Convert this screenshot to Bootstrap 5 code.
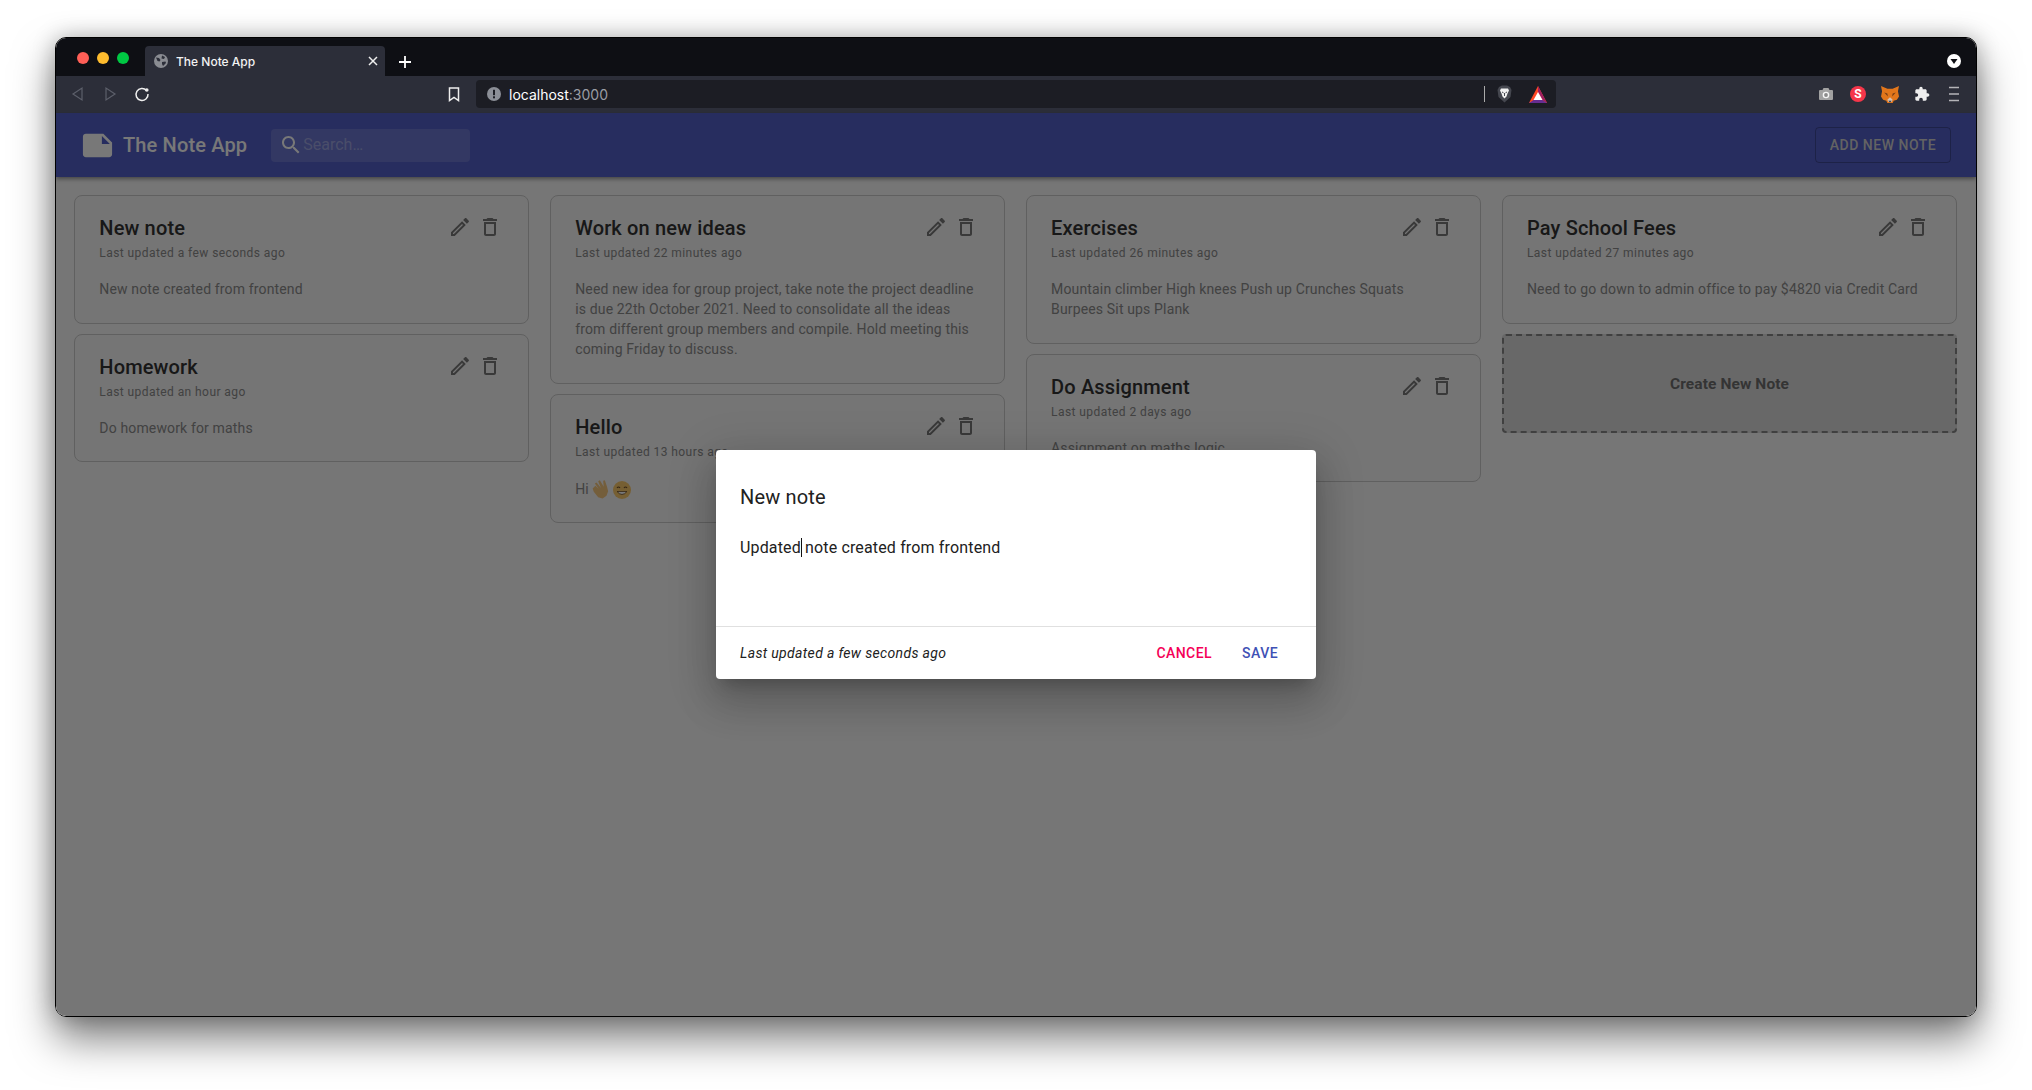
<!DOCTYPE html>
<html lang="en">
<head>
  <meta charset="UTF-8" />
  <title>The Note App</title>
  <link href="https://cdn.jsdelivr.net/npm/bootstrap@5.3.2/dist/css/bootstrap.min.css" rel="stylesheet">
  <style>
    html, body { height: 100%; }
    body { background: #fff; font-family: Roboto, "Liberation Sans", sans-serif; overflow: hidden; padding: 37px 0 0 55px; }

    /* browser window */
    .win { width: 1922px; height: 980px; border: 1px solid #000; border-radius: 11px; overflow: hidden; box-shadow: 0 22px 42px rgba(0,0,0,.5), 0 0 22px rgba(0,0,0,.25); }
    .tabstrip { height: 38px; background: #0e0f14; padding-left: 21px; }
    .light { width: 12px; height: 12px; border-radius: 50%; }
    .tab-item { width: 240px; height: 30px; margin-left: 16px; padding: 0 7px 0 9px; background: #2c2e39; border-radius: 4px 4px 0 0; color: #f2f2f2; font: 500 12px Inter, sans-serif; }
    .toolbar { height: 37px; padding-bottom: 1px; background: #2c2e39; }
    .tb-left { width: 420px; padding: 0 14px; }
    .addr { width: 1080px; height: 28px; background: #1c1d24; border-radius: 4px; padding: 0 9px 0 11px; color: #fff; font: 400 14px Inter, sans-serif; }
    .addr .port { color: #9a9ca3; }
    .addr-sep { width: 1px; height: 16px; background: #aaa; }
    .tb-right { padding-right: 14px; }

    /* app */
    .app-area { height: 904px; }
    .app-bar { height: 64px; padding: 0 25px 0 24px; background: rgb(83,96,202); box-shadow: 0 2px 4px rgba(0,0,0,.4); position: relative; z-index: 1; }
    .brand { color: #fff; font-size: 20px; font-weight: 500; letter-spacing: .15px; margin: 0 24px 0 8px; }
    .search-box { width: 199px; height: 33px; padding-left: 8px; background: rgba(255,255,255,.15); border-radius: 4px; }
    .search-box input { background: none; border: 0; outline: 0; padding: 0; width: 150px; font-size: 16px; color: #fff; }
    .search-box input::placeholder { color: rgba(255,255,255,.35); }
    .add-btn { width: 136px; height: 36px; padding: 0; color: #d2d2d2; font-size: 14px; font-weight: 500; letter-spacing: .5px; border: 1px solid rgba(0,0,0,.25); border-radius: 4px; }

    .note-grid { gap: 20.9px; padding: 18px 18px 0 18.3px; background: #fafafa; height: 840px; }
    .note-col { width: 455px; gap: 10.2px; }
    .note-card { background: #f8f8f8; border: 1px solid #ccc; border-radius: 8px; padding: 16px 24px 23.5px; }
    .note-title { font-size: 20px; font-weight: 500; line-height: 32px; letter-spacing: .15px; color: #333; margin: 0; }
    .note-meta { font-size: 12px; line-height: 20px; letter-spacing: .43px; color: #8c8c8c; margin-bottom: 16px; margin-top: -1px; }
    .note-text { font-size: 14px; line-height: 20px; letter-spacing: .15px; color: #8c8c8c; margin: 0; }
    .note-actions { margin-top: 3px; margin-right: 2px; gap: 6px; }
    .note-actions svg { fill: #7a7a7a; display: block; }
    .emo { vertical-align: -5px; }
    .create-card { height: 99px; padding-top: 2px; background: #dedede; border: 2px dashed #888; border-radius: 4px; color: #707070; font-size: 15.5px; font-weight: 700; letter-spacing: .1px; }

    /* dialog */
    .dim { position: absolute; inset: 0; background: rgba(0,0,0,.53); z-index: 2; }
    .note-modal { position: absolute; top: 337px; left: 660px; width: 600px; height: 229px; z-index: 3; border: 0; border-radius: 4px; background: #fff; box-shadow: 0 11px 15px -7px rgba(0,0,0,.2), 0 24px 38px 3px rgba(0,0,0,.14), 0 9px 46px 8px rgba(0,0,0,.12); }
    .dlg-title { font-size: 20px; font-weight: 400; line-height: 32px; letter-spacing: .15px; color: #212121; padding: 31px 24px 0; margin: 0; }
    .dlg-text { font-size: 16px; line-height: 24px; letter-spacing: .15px; color: #212121; padding: 23px 24px 0; height: 113px; }
    .caret-bar { display: inline-block; width: 1px; height: 19px; background: #111; vertical-align: -4px; margin-right: -1px; }
    .dlg-foot { height: 53px; border-top: 1px solid #e0e0e0; padding: 0 30px 0 24px; }
    .dlg-foot em { font-size: 14px; letter-spacing: .34px; color: #212121; }
    .dlg-btn { padding: 6px 8px; font-size: 14px; font-weight: 500; letter-spacing: .45px; border: 0; line-height: 20px; }
    .dlg-btn.cancel { color: #f50057; }
    .dlg-btn.save { color: #3f51b5; margin-left: 14px; }
  </style>
</head>
<body>

<svg width="0" height="0" class="position-absolute">
  <symbol id="ic-edit" viewBox="0 0 24 24"><path d="M14.06 9.02l.92.92L5.92 19H5v-.92l9.06-9.06M17.66 3c-.25 0-.51.1-.7.29l-1.83 1.83 3.75 3.75 1.83-1.83c.39-.39.39-1.02 0-1.41l-2.34-2.34c-.2-.2-.45-.29-.71-.29zm-3.6 3.19L3 17.25V21h3.75L17.81 9.94l-3.75-3.75z"/></symbol>
  <symbol id="ic-trash" viewBox="0 0 24 24"><path d="M16 9v10H8V9h8m-1.5-6h-5l-1 1H5v2h14V4h-3.5l-1-1zM18 7H6v12c0 1.1.9 2 2 2h8c1.1 0 2-.9 2-2V7z"/></symbol>
</svg>

<div class="win d-flex flex-column">

  <!-- tabs -->
  <div class="tabstrip d-flex align-items-end flex-shrink-0">
    <div class="d-flex gap-2 align-self-center" style="margin-top:1px">
      <span class="light" style="background:#ff5f57"></span>
      <span class="light" style="background:#febc2e"></span>
      <span class="light" style="background:#00c843"></span>
    </div>
    <div class="tab-item d-flex align-items-center">
      <svg width="14" height="14" viewBox="0 0 14 14" class="me-2 flex-shrink-0"><circle cx="7" cy="7" r="7" fill="#8a8c92"/><path d="M2 3.5l3 .5 1.5 2-1 1.5-2-.5zM8 1.5l3 1.5-1 2-2.5-.5zM8 8l3.5-.5.5 1.5-3 3-1-2z" fill="#2c2e39"/></svg>
      <span class="flex-grow-1">The Note App</span>
      <svg width="10" height="10" viewBox="0 0 10 10"><path d="M1 1l8 8M9 1l-8 8" stroke="#eee" stroke-width="1.5"/></svg>
    </div>
    <svg width="14" height="14" viewBox="0 0 14 14" class="align-self-end" style="margin:0 0 7px 13px"><path d="M7 1v12M1 7h12" stroke="#fff" stroke-width="1.8"/></svg>
    <svg width="14" height="14" viewBox="0 0 14 14" class="ms-auto align-self-end" style="margin:0 15px 8px 0"><circle cx="7" cy="7" r="7" fill="#fff"/><path d="M3.5 5h7L7 10z" fill="#0e0f14"/></svg>
  </div>

  <!-- address bar -->
  <div class="toolbar d-flex align-items-center flex-shrink-0">
    <div class="tb-left d-flex align-items-center gap-3">
      <svg width="16" height="16" viewBox="0 0 16 16"><path d="M12 2v12L3 8z" fill="none" stroke="#5d606b" stroke-width="1.2"/></svg>
      <svg width="16" height="16" viewBox="0 0 16 16"><path d="M4 2v12l9-6z" fill="none" stroke="#5d606b" stroke-width="1.2"/></svg>
      <svg width="16" height="16" viewBox="0 0 16 16"><path d="M12.5 4.5A6 6 0 1 0 14 8" fill="none" stroke="#eee" stroke-width="1.5"/><circle cx="12.8" cy="4" r="1.8" fill="#eee"/></svg>
      <svg width="12" height="15" viewBox="0 0 12 15" class="ms-auto" style="margin-right:2px"><path d="M1.5 1h9v12.5L6 10.5l-4.500 3z" fill="none" stroke="#eee" stroke-width="1.5"/></svg>
    </div>
    <div class="addr d-flex align-items-center">
      <svg width="14" height="14" viewBox="0 0 14 14" class="me-2 flex-shrink-0"><circle cx="7" cy="7" r="7" fill="#8c8f97"/><rect x="6" y="2.8" width="2" height="5.4" fill="#1c1d24"/><rect x="6" y="9.3" width="2" height="2" fill="#1c1d24"/></svg>
      <span>localhost<span class="port">:3000</span></span>
      <span class="addr-sep ms-auto"></span>
      <svg width="15" height="18" viewBox="0 0 15 18" style="margin-left:12px"><path d="M2 2l3-1.5h5L13 2l1.500 3-1 7-6 5.500-6-5.500-1-7z" fill="#45474f"/><path d="M4 3.5h7l1 2-1.500 3-1 3-2 2-2-2-1-3L3 5.500z" fill="#f1f1f1"/><path d="M5 7l1.500.8M10 7l-1.500.8M7.500 8v3" stroke="#45474f" stroke-width="1"/></svg>
      <svg width="18" height="17" viewBox="0 0 18 17" style="margin-left:17px"><path d="M9 0l9 17H0z" fill="#ff4724"/><path d="M9 0l9 17-4.500-3L9 6z" fill="#9e1f63"/><path d="M0 17l4.500-3h9l4.500 3z" fill="#662d91"/><path d="M9 6l4.500 8h-9z" fill="#fff"/></svg>
    </div>
    <div class="tb-right d-flex align-items-center gap-3 ms-auto">
      <svg width="16" height="16" viewBox="0 0 16 16"><path d="M5.5 2h5l1 2H14a1 1 0 0 1 1 1v8a1 1 0 0 1-1 1H2a1 1 0 0 1-1-1V5a1 1 0 0 1 1-1h2.500z" fill="#a2a2a2"/><circle cx="8" cy="9" r="3.3" fill="#f4f4f4"/><circle cx="8" cy="9" r="1.9" fill="#8a8a8a"/></svg>
      <span class="d-flex align-items-center justify-content-center rounded-circle" style="width:16px;height:16px;background:#f5364a;color:#fff;font:700 12px Roboto,sans-serif">S</span>
      <svg width="18" height="17" viewBox="0 0 17 16" style="margin:0 -1px"><path d="M0 0l6 2.500h5L17 0l-1 5 1 5-2 3-3 1-1 2H6l-1-2-3-1-2-3 1-5z" fill="#e2761b"/><path d="M3 6l3 1 .5 3zM14 6l-3 1-.5 3z" fill="#763d16"/><path d="M6 13l2.500-2.500L11 13l-1 2H7z" fill="#d7c1b3"/><path d="M7 14h3l-1.500 1.500z" fill="#233447"/></svg>
      <svg width="16" height="16" viewBox="0 0 24 24"><path fill="#eee" d="M20.5 11H19V7c0-1.1-.9-2-2-2h-4V3.5C13 2.12 11.88 1 10.5 1S8 2.12 8 3.5V5H4c-1.1 0-1.99.9-1.99 2v3.8H3.5c1.49 0 2.7 1.21 2.7 2.7s-1.21 2.7-2.7 2.7H2V20c0 1.1.9 2 2 2h3.8v-1.500c0-1.49 1.21-2.7 2.7-2.7 1.49 0 2.7 1.21 2.7 2.7V22H17c1.1 0 2-.9 2-2v-4h1.500c1.38 0 2.5-1.12 2.5-2.5S21.88 11 20.5 11z"/></svg>
      <svg width="16" height="16" viewBox="0 0 16 16"><path d="M3 1.5h10M3 8h10M3 14.5h10" stroke="#b4b4b8" stroke-width="1.5"/></svg>
    </div>
  </div>

  <!-- the note app -->
  <div class="app-area position-relative">
    <nav class="app-bar d-flex align-items-center">
      <svg width="35" height="35" viewBox="0 0 24 24" class="flex-shrink-0"><path fill="#fff" d="M22 10l-6-6H4c-1.1 0-2 .9-2 2v12.01c0 1.1.9 1.99 2 1.99l16-.01c1.1 0 2-.89 2-1.99v-8zm-7-4.500l5.500 5.500H15V5.500z"/></svg>
      <span class="brand">The Note App</span>
      <div class="search-box d-flex align-items-center">
        <svg width="24" height="24" viewBox="0 0 24 24" class="flex-shrink-0"><path fill="#fff" d="M15.5 14h-.79l-.28-.27C15.41 12.59 16 11.11 16 9.5 16 5.91 13.09 3 9.5 3S3 5.91 3 9.5 5.91 16 9.5 16c1.61 0 3.09-.59 4.23-1.57l.27.28v.79l5 4.99L20.49 19l-4.99-5zm-6 0C7.01 14 5 11.99 5 9.5S7.01 5 9.5 5 14 7.01 14 9.5 11.99 14 9.5 14z"/></svg>
        <input type="text" placeholder="Search…">
      </div>
      <button class="btn add-btn ms-auto">ADD NEW NOTE</button>
    </nav>

    <div class="note-grid d-flex">

      <div class="note-col d-flex flex-column">
        <div class="card note-card">
          <div class="d-flex justify-content-between">
            <div>
              <h6 class="note-title">New note</h6>
              <div class="note-meta">Last updated a few seconds ago</div>
            </div>
            <div class="note-actions d-flex">
              <svg width="24" height="24"><use href="#ic-edit"/></svg>
              <svg width="24" height="24"><use href="#ic-trash"/></svg>
            </div>
          </div>
          <p class="note-text">New note created from frontend</p>
        </div>
        <div class="card note-card">
          <div class="d-flex justify-content-between">
            <div>
              <h6 class="note-title">Homework</h6>
              <div class="note-meta">Last updated an hour ago</div>
            </div>
            <div class="note-actions d-flex">
              <svg width="24" height="24"><use href="#ic-edit"/></svg>
              <svg width="24" height="24"><use href="#ic-trash"/></svg>
            </div>
          </div>
          <p class="note-text">Do homework for maths</p>
        </div>
      </div>

      <div class="note-col d-flex flex-column">
        <div class="card note-card">
          <div class="d-flex justify-content-between">
            <div>
              <h6 class="note-title">Work on new ideas</h6>
              <div class="note-meta">Last updated 22 minutes ago</div>
            </div>
            <div class="note-actions d-flex">
              <svg width="24" height="24"><use href="#ic-edit"/></svg>
              <svg width="24" height="24"><use href="#ic-trash"/></svg>
            </div>
          </div>
          <p class="note-text">Need new idea for group project, take note the project deadline<br>is due 22th October 2021. Need to consolidate all the ideas<br>from different group members and compile. Hold meeting this<br>coming Friday to discuss.</p>
        </div>
        <div class="card note-card">
          <div class="d-flex justify-content-between">
            <div>
              <h6 class="note-title">Hello</h6>
              <div class="note-meta">Last updated 13 hours ago</div>
            </div>
            <div class="note-actions d-flex">
              <svg width="24" height="24"><use href="#ic-edit"/></svg>
              <svg width="24" height="24"><use href="#ic-trash"/></svg>
            </div>
          </div>
          <p class="note-text">Hi <svg class="emo" width="21" height="21" viewBox="0 0 19 19" style="margin:0 -2px 0 -2px"><path d="M4 7l3 3-3.500-5 1.500-1 4 5-2.500-6L8 2l3.500 6L11 2.500l1.500-.5 2 6 1 4-1.500 4-3.500 2.500-4-1-4-5-1-3z" fill="#f7c77e"/></svg> <svg class="emo" width="18" height="18" viewBox="0 0 18 18"><circle cx="9" cy="9" r="9" fill="#fbc96c"/><path d="M4 7q1.500-2 3 0M11 7q1.500-2 3 0" fill="none" stroke="#70502a" stroke-width="1.2"/><path d="M4 10.500q5 6 10 0z" fill="#fff" stroke="#70502a" stroke-width=".8"/></svg></p>
        </div>
      </div>

      <div class="note-col d-flex flex-column">
        <div class="card note-card">
          <div class="d-flex justify-content-between">
            <div>
              <h6 class="note-title">Exercises</h6>
              <div class="note-meta">Last updated 26 minutes ago</div>
            </div>
            <div class="note-actions d-flex">
              <svg width="24" height="24"><use href="#ic-edit"/></svg>
              <svg width="24" height="24"><use href="#ic-trash"/></svg>
            </div>
          </div>
          <p class="note-text">Mountain climber High knees Push up Crunches Squats<br>Burpees Sit ups Plank</p>
        </div>
        <div class="card note-card">
          <div class="d-flex justify-content-between">
            <div>
              <h6 class="note-title">Do Assignment</h6>
              <div class="note-meta">Last updated 2 days ago</div>
            </div>
            <div class="note-actions d-flex">
              <svg width="24" height="24"><use href="#ic-edit"/></svg>
              <svg width="24" height="24"><use href="#ic-trash"/></svg>
            </div>
          </div>
          <p class="note-text">Assignment on maths logic</p>
        </div>
      </div>

      <div class="note-col d-flex flex-column">
        <div class="card note-card">
          <div class="d-flex justify-content-between">
            <div>
              <h6 class="note-title">Pay School Fees</h6>
              <div class="note-meta">Last updated 27 minutes ago</div>
            </div>
            <div class="note-actions d-flex">
              <svg width="24" height="24"><use href="#ic-edit"/></svg>
              <svg width="24" height="24"><use href="#ic-trash"/></svg>
            </div>
          </div>
          <p class="note-text">Need to go down to admin office to pay $4820 via Credit Card</p>
        </div>
        <div class="create-card d-flex align-items-center justify-content-center">Create New Note</div>
      </div>

    </div>

    <div class="dim"></div>

    <div class="modal-content note-modal">
      <h5 class="dlg-title">New note</h5>
      <div class="dlg-text">Updated<span class="caret-bar"></span> note created from frontend</div>
      <div class="dlg-foot d-flex align-items-center">
        <em>Last updated a few seconds ago</em>
        <button class="btn dlg-btn cancel ms-auto">CANCEL</button>
        <button class="btn dlg-btn save">SAVE</button>
      </div>
    </div>
  </div>

</div>

<script src="https://cdn.jsdelivr.net/npm/bootstrap@5.3.2/dist/js/bootstrap.bundle.min.js"></script>
</body>
</html>
